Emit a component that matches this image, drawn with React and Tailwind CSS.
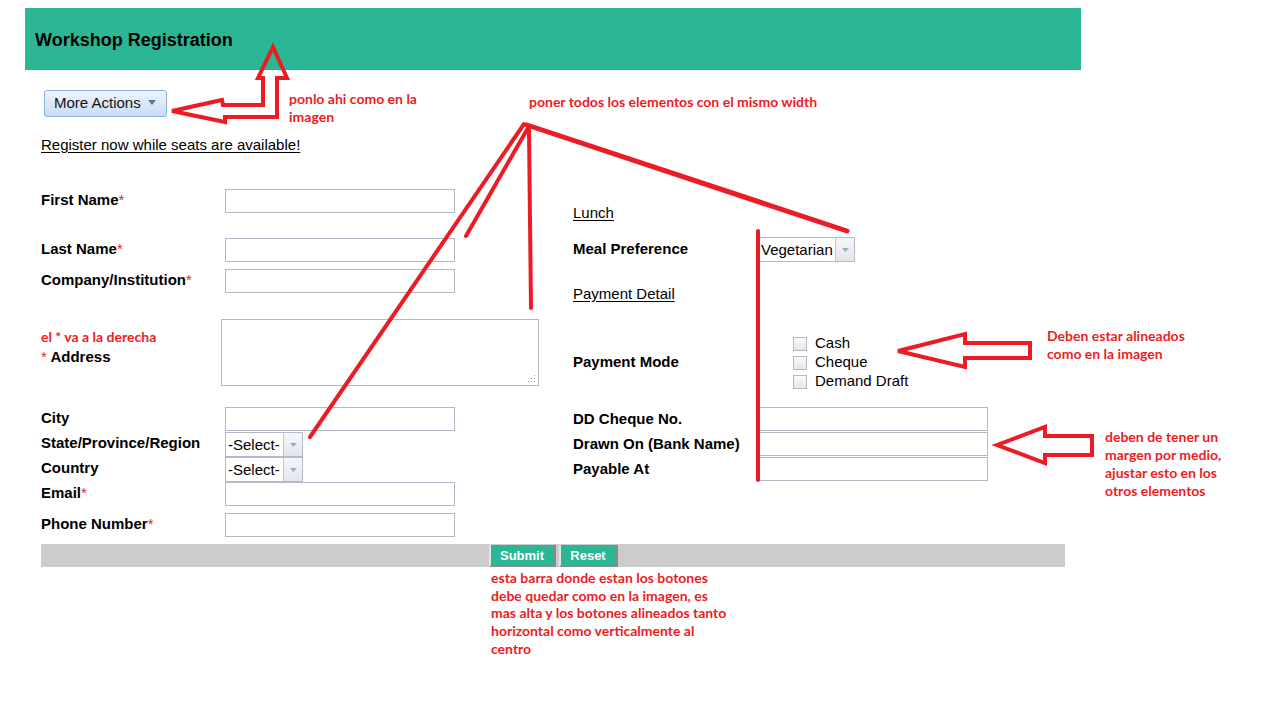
import React from "react";

function TextBox({ className = "" }) {
  return (
    <input
      type="text"
      className={"h-[24px] w-[230px] border border-[#b5b8c8] bg-white outline-none " + className}
    />
  );
}

function Trigger() {
  return (
    <span className="flex w-[19px] shrink-0 items-center justify-center border-l border-[#c5c8d4] bg-linear-to-b from-[#f6f7f9] to-[#e2e5ea]">
      <svg width="7" height="4" viewBox="0 0 7 4">
        <path d="M0 0H7L3.5 4Z" fill="#9aabc6" />
      </svg>
    </span>
  );
}

function Select({ value, className = "" }) {
  return (
    <div className={"flex h-[25px] border border-[#b5b8c8] bg-white " + className}>
      <span className="flex-1 overflow-hidden whitespace-nowrap pl-[2px] text-[15px] leading-[23px]">{value}</span>
      <Trigger />
    </div>
  );
}

function Req() {
  return <span className="font-normal text-[#ee1c25]">*</span>;
}

function Label({ children, className = "" }) {
  return <div className={"w-[184px] shrink-0 pb-[4px] text-[15px] font-bold leading-[17px] " + className}>{children}</div>;
}

function RLabel({ children }) {
  return <div className="w-[185px] shrink-0 pb-[2px] text-[15px] font-bold leading-[17px]">{children}</div>;
}

function Check({ label }) {
  return (
    <div className="flex h-[19px] items-start">
      <span className="mt-[4px] h-[14px] w-[14px] border border-[#b5b8c8] bg-linear-to-b from-[#fbfbfb] to-[#e4e6ea]" />
      <span className="ml-[8px] text-[15px] leading-[19px]">{label}</span>
    </div>
  );
}

function Note({ className = "", lines, leading = "leading-[18px]" }) {
  return (
    <div className={"pointer-events-none absolute whitespace-nowrap font-['Lato',sans-serif] text-[14px] font-bold text-[#ed1c24] " + leading + " " + className}>
      {lines.map((l, i) => (
        <div key={i}>{l}</div>
      ))}
    </div>
  );
}

export default function App() {
  return (
    <div className="relative h-[709px] w-[1265px] overflow-hidden bg-white font-['Liberation_Sans',Arial,sans-serif] text-black">
      <div className="pl-[25px] pt-[8px]">
        <header className="flex h-[62px] w-[1056px] items-center bg-[#2bb795] pl-[10px] pt-[2px]">
          <h1 className="text-[18px] font-bold leading-[18px]">Workshop Registration</h1>
        </header>
      </div>

      <div className="pl-[41px]">
        <button className="ml-[3px] mt-[20px] flex h-[27px] w-[123px] items-center rounded-[3px] border border-[#8eb1d9] bg-linear-to-b from-[#eef4fc] to-[#c9dcf3] pb-[2px] pl-[9px] text-[15px] leading-[17px] text-[#111]">
          <span>More Actions</span>
          <svg className="ml-[7px]" width="8" height="5" viewBox="0 0 8 5">
            <path d="M0 0H8L4 5Z" fill="#5d7799" />
          </svg>
        </button>

        <div className="mt-[19px] leading-[17px]">
          <a className="text-[15px] underline underline-offset-[2px]">Register now while seats are available!</a>
        </div>

        <div className="mt-[36px] flex items-start">
          {/* Left column */}
          <div className="flex w-[532px] shrink-0 flex-col">
            <div className="flex h-[24px] items-center">
              <Label>First Name<Req /></Label>
              <TextBox />
            </div>
            <div className="mt-[25px] flex h-[24px] items-center">
              <Label>Last Name<Req /></Label>
              <TextBox />
            </div>
            <div className="mt-[7px] flex h-[24px] items-center">
              <Label>Company/Institution<Req /></Label>
              <TextBox />
            </div>
            <div className="mt-[26px] flex h-[67px] items-start">
              <div className="w-[180px] shrink-0 pt-[29px] text-[15px] font-bold leading-[17px]">
                <span className="font-normal text-[#ee1c25]">*</span> Address
              </div>
              <div className="relative h-[67px] w-[318px]">
                <textarea className="block h-full w-full resize-none border border-[#b5b8c8] bg-white outline-none" />
                <svg className="absolute bottom-[3px] right-[3px]" width="8" height="8" viewBox="0 0 8 8">
                  <rect x="6" y="0" width="1" height="1" fill="#a0a0a0" />
                  <rect x="3" y="3" width="1" height="1" fill="#a0a0a0" />
                  <rect x="6" y="3" width="1" height="1" fill="#a0a0a0" />
                  <rect x="0" y="6" width="1" height="1" fill="#a0a0a0" />
                  <rect x="3" y="6" width="1" height="1" fill="#a0a0a0" />
                  <rect x="6" y="6" width="1" height="1" fill="#a0a0a0" />
                </svg>
              </div>
            </div>
            <div className="mt-[21px] flex h-[24px] items-center">
              <Label>City</Label>
              <TextBox />
            </div>
            <div className="mt-[1px] flex h-[25px] items-center">
              <Label>State/Province/Region</Label>
              <Select value="-Select-" className="w-[78px]" />
            </div>
            <div className="flex h-[25px] items-center">
              <Label>Country</Label>
              <Select value="-Select-" className="w-[78px]" />
            </div>
            <div className="flex h-[24px] items-center">
              <Label>Email<Req /></Label>
              <TextBox />
            </div>
            <div className="mt-[7px] flex h-[24px] items-center">
              <Label>Phone Number<Req /></Label>
              <TextBox />
            </div>
          </div>

          {/* Right column */}
          <div className="flex flex-col">
            <a className="mt-[15px] self-start text-[15px] leading-[17px] underline underline-offset-[2px]">Lunch</a>
            <div className="mt-[16px] flex h-[25px] items-center">
              <RLabel>Meal Preference</RLabel>
              <Select value="Vegetarian" className="w-[97px]" />
            </div>
            <a className="mt-[23px] self-start text-[15px] leading-[17px] underline underline-offset-[2px]">Payment Detail</a>
            <div className="mt-[31px] flex items-center">
              <div className="w-[185px] shrink-0 text-[15px] font-bold leading-[17px]">Payment Mode</div>
              <div className="flex flex-col pl-[35px]">
                <Check label="Cash" />
                <Check label="Cheque" />
                <Check label="Demand Draft" />
              </div>
            </div>
            <div className="mt-[17px] flex h-[24px] items-center">
              <RLabel>DD Cheque No.</RLabel>
              <TextBox />
            </div>
            <div className="mt-[1px] flex h-[24px] items-center">
              <RLabel>Drawn On (Bank Name)</RLabel>
              <TextBox />
            </div>
            <div className="mt-[1px] flex h-[24px] items-center">
              <RLabel>Payable At</RLabel>
              <TextBox />
            </div>
          </div>
        </div>

        <div className="mt-[7px] flex h-[23px] w-[1024px] items-end justify-center gap-[3px] bg-[#cccccc]">
          <button className="h-[22px] w-[67px] border-b-2 border-l-2 border-r-2 border-b-[#8a8a8a] border-l-[#e6e6e6] border-r-[#8a8a8a] bg-[#2bb795] text-[13px] font-bold leading-[22px] text-white">
            Submit
          </button>
          <button className="h-[22px] w-[59px] border-b-2 border-l-2 border-r-2 border-b-[#8a8a8a] border-l-[#e6e6e6] border-r-[#8a8a8a] bg-[#2bb795] text-[13px] font-bold leading-[22px] text-white">
            Reset
          </button>
        </div>
      </div>

      {/* Annotation drawings */}
      <svg className="pointer-events-none absolute left-0 top-0" width="1265" height="709" viewBox="0 0 1265 709">
        <g fill="none" stroke="#ed1c24" strokeWidth="4" strokeLinejoin="miter" strokeLinecap="round">
          <path d="M273 47 L287 78 L277 78 L277 117 L225 117 L225 122 L172 111 L222 100 L223 105 L263 105 L263 78 L258 78 Z" />
          <path d="M898 351 L965 334 L965 343 L1030 343 L1030 358 L965 358 L965 367 Z" />
          <path d="M997 445 L1045 427 L1045 436 L1092 436 L1092 455 L1045 455 L1045 463 Z" />
          <path d="M524 124 L310 437" />
          <path d="M528 128 L466 236" />
          <path d="M529 130 L531 308" />
          <path d="M527 125 L847 231" strokeWidth="5" />
          <path d="M758 231 L758 480" />
        </g>
      </svg>

      {/* Annotation notes */}
      <Note className="left-[289px] top-[90px]" lines={["ponlo ahi como en la", "imagen"]} />
      <Note className="left-[529px] top-[93px]" lines={["poner todos los elementos con el mismo width"]} />
      <Note className="left-[1047px] top-[327px]" lines={["Deben estar alineados", "como en la imagen"]} />
      <Note className="left-[1105px] top-[428px]" lines={["deben de tener un", "margen por medio,", "ajustar esto en los", "otros elementos"]} />
      <Note className="left-[41px] top-[328px]" lines={["el * va a la derecha"]} />
      <Note
        className="left-[491px] top-[569px]"
        leading="leading-[17.7px]"
        lines={[
          "esta barra donde estan los botones",
          "debe quedar como en la imagen, es",
          "mas alta y los botones alineados tanto",
          "horizontal como verticalmente al",
          "centro",
        ]}
      />
    </div>
  );
}
